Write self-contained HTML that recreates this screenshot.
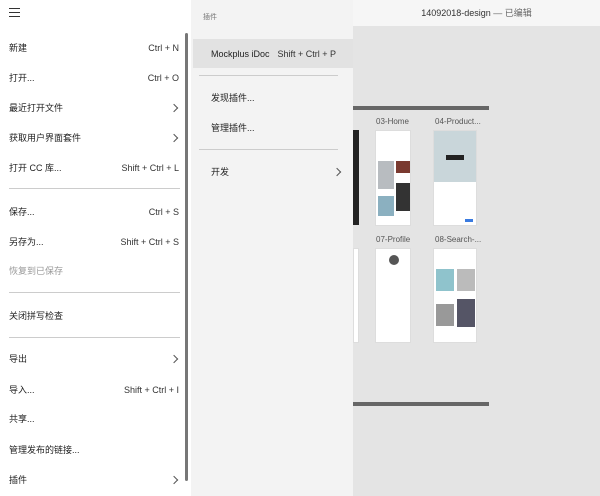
<!DOCTYPE html>
<html><head><meta charset="utf-8"><style>
*{margin:0;padding:0;box-sizing:border-box}
body{width:600px;height:496px;overflow:hidden;position:relative;background:#e4e4e4;font-family:"Liberation Sans","Noto Sans CJK SC",sans-serif;font-size:9px;color:#222}
.left{position:absolute;left:0;top:0;width:191px;height:496px;background:#fff}
.it{position:absolute;left:9px;width:170px;height:14px;line-height:14px}
.it .k{position:absolute;right:0;top:0;color:#333}
.chev{position:absolute;right:2px;top:4px;width:6px;height:6px;border-right:1px solid #555;border-top:1px solid #555;transform:rotate(45deg)}
.dv{position:absolute;left:9px;width:171px;height:1px;background:#ccc}
.mid{position:absolute;left:191px;top:0;width:162px;height:496px;background:#f3f3f3}
.mid .it{left:20px;width:125px}
.mid .dv{left:8px;width:139px}
.top{position:absolute;left:353px;top:0;width:247px;height:26px;background:#f6f6f6;text-align:center;line-height:26px;font-size:9px;color:#333}
.bar{position:absolute;left:353px;width:136px;height:4px;background:#666}
.lab{position:absolute;font-size:8px;color:#555}
.card{position:absolute;background:#fff;border:1px solid #ddd}
</style></head><body>
<div class="left">
<div style="position:absolute;left:9px;top:8px;width:11px;height:1px;background:#333;box-shadow:0 4px 0 #333,0 8px 0 #333"></div>
<div class="it" style="top:41px">新建<span class="k">Ctrl + N</span></div>
<div class="it" style="top:71px">打开...<span class="k">Ctrl + O</span></div>
<div class="it" style="top:101px">最近打开文件<span class="chev"></span></div>
<div class="it" style="top:131px">获取用户界面套件<span class="chev"></span></div>
<div class="it" style="top:161px">打开 CC 库...<span class="k">Shift + Ctrl + L</span></div>
<div class="dv" style="top:188px"></div>
<div class="it" style="top:205px">保存...<span class="k">Ctrl + S</span></div>
<div class="it" style="top:235px">另存为...<span class="k">Shift + Ctrl + S</span></div>
<div class="it" style="top:264px;color:#999">恢复到已保存</div>
<div class="dv" style="top:292px"></div>
<div class="it" style="top:309px">关闭拼写检查</div>
<div class="dv" style="top:337px"></div>
<div class="it" style="top:352px">导出<span class="chev"></span></div>
<div class="it" style="top:383px">导入...<span class="k">Shift + Ctrl + I</span></div>
<div class="it" style="top:412px">共享...</div>
<div class="it" style="top:443px">管理发布的链接...</div>
<div class="it" style="top:473px">插件<span class="chev"></span></div>
<div style="position:absolute;left:185px;top:33px;width:3px;height:448px;background:#777;border-radius:2px"></div>
</div>
<div class="mid">
<div style="position:absolute;left:12px;top:12px;font-size:7px;color:#777">插件</div>
<div style="position:absolute;left:2px;top:39px;width:160px;height:29px;background:#e2e2e2"></div>
<div class="it" style="top:47px;width:125px">Mockplus iDoc<span class="k">Shift + Ctrl + P</span></div>
<div class="dv" style="top:75px"></div>
<div class="it" style="top:91px">发现插件...</div>
<div class="it" style="top:121px">管理插件...</div>
<div class="dv" style="top:149px"></div>
<div class="it" style="top:165px;width:131px">开发<span class="chev"></span></div>
</div>
<div class="top">14092018-design <span style="color:#666">— 已编辑</span></div>
<div class="bar" style="top:106px"></div>
<div class="bar" style="top:402px"></div>
<div class="card" style="left:353px;top:130px;width:6px;height:95px;background:#222;border:none"></div>
<div class="card" style="left:353px;top:248px;width:6px;height:95px"></div>
<div class="lab" style="left:376px;top:117px">03-Home</div>
<div class="lab" style="left:435px;top:117px">04-Product...</div>
<div class="lab" style="left:376px;top:235px">07-Profile</div>
<div class="lab" style="left:435px;top:235px">08-Search-...</div>
<div class="card" style="left:375px;top:130px;width:36px;height:96px">
<div style="position:absolute;left:2px;top:30px;width:16px;height:28px;background:#b8bcc0"></div>
<div style="position:absolute;left:20px;top:30px;width:14px;height:12px;background:#7a3a30"></div>
<div style="position:absolute;left:20px;top:52px;width:14px;height:28px;background:#333"></div>
<div style="position:absolute;left:2px;top:65px;width:16px;height:20px;background:#8bb0c0"></div>
</div>
<div class="card" style="left:433px;top:130px;width:44px;height:96px">
<div style="position:absolute;left:0;top:0;width:42px;height:51px;background:#c9d6da"></div>
<div style="position:absolute;left:12px;top:24px;width:18px;height:5px;background:#222"></div>
<div style="position:absolute;right:3px;bottom:3px;width:8px;height:3px;background:#3a7be0"></div>
</div>
<div class="card" style="left:375px;top:248px;width:36px;height:95px">
<div style="position:absolute;left:13px;top:6px;width:10px;height:10px;border-radius:50%;background:#555"></div>
</div>
<div class="card" style="left:433px;top:248px;width:44px;height:95px">
<div style="position:absolute;left:2px;top:20px;width:18px;height:22px;background:#8fc3cc"></div>
<div style="position:absolute;left:23px;top:20px;width:18px;height:22px;background:#bbb"></div>
<div style="position:absolute;left:2px;top:55px;width:18px;height:22px;background:#999"></div>
<div style="position:absolute;left:23px;top:50px;width:18px;height:28px;background:#556"></div>
</div>
</body></html>
